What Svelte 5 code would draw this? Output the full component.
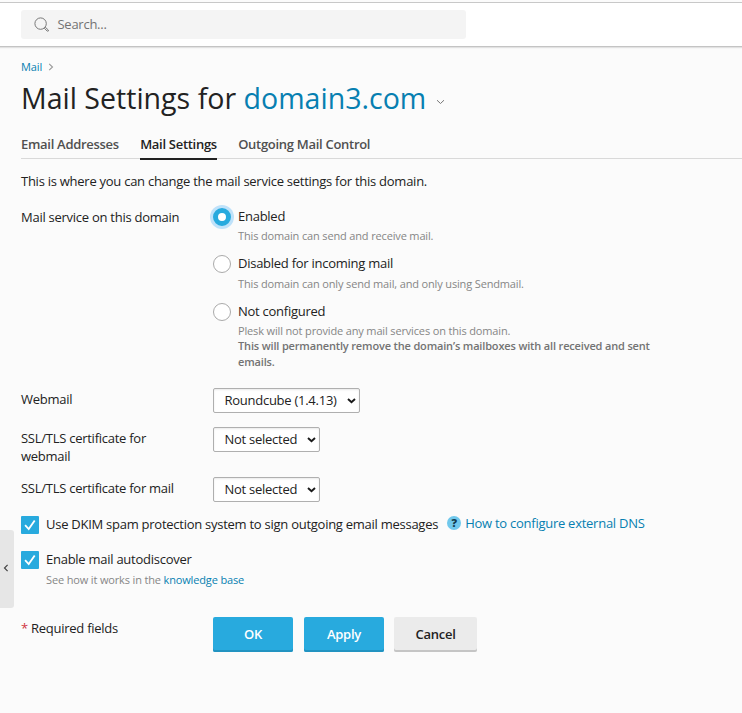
<script>
  let service = $state('enabled');
  let dkim = $state(true);
  let autodiscover = $state(true);
  const tabs = ['Email Addresses', 'Mail Settings', 'Outgoing Mail Control'];
  const modes = [
    { id: 'enabled', label: 'Enabled', hint: 'This domain can send and receive mail.' },
    { id: 'incoming', label: 'Disabled for incoming mail', hint: 'This domain can only send mail, and only using Sendmail.' },
    {
      id: 'none',
      label: 'Not configured',
      hint: 'Plesk will not provide any mail services on this domain.',
      warning: 'This will permanently remove the domain’s mailboxes with all received and sent emails.'
    }
  ];
  const selects = [
    { label: 'Webmail', value: 'Roundcube (1.4.13)', kind: 'webmail' },
    { label: 'SSL/TLS certificate for webmail', value: 'Not selected', kind: 'cert-webmail' },
    { label: 'SSL/TLS certificate for mail', value: 'Not selected', kind: 'cert-mail' }
  ];
</script>

{#snippet check(on)}
  <span class="box" class:on>
    {#if on}
      <svg width="18" height="18" viewBox="0 0 18 18"><path d="M4.1 9.2 7.7 13 13.7 4.4" fill="none" stroke="#fff" stroke-width="1.8" /></svg>
    {/if}
  </span>
{/snippet}

<div class="page">
  <header>
    <div class="search">
      <svg width="16" height="16" viewBox="0 0 16 16" fill="none" stroke="#777" stroke-width="1">
        <circle cx="6.6" cy="6.6" r="5.7" />
        <path d="M10.3 11.2 11.3 10.2 14.4 13.1Q14.8 14.4 13.3 14.2Z" />
      </svg>
      <span>Search...</span>
    </div>
  </header>

  <main>
    <nav class="crumbs">
      <a href="#mail">Mail</a>
      <svg width="6" height="8" viewBox="0 0 6 8"><path d="M1.2.8 4.5 4 1.2 7.2" fill="none" stroke="#999" stroke-width="1.1" /></svg>
    </nav>
    <h1>
      Mail Settings for <a href="#domain">domain3.com</a>
      <svg width="9" height="6" viewBox="0 0 9 6"><path d="M1 1.2 4.5 4.5 8 1.2" fill="none" stroke="#777" /></svg>
    </h1>
    <div class="tabs">
      {#each tabs as tab}
        <a href="#tab" class:active={tab === 'Mail Settings'}>{tab}</a>
      {/each}
    </div>

    <p class="intro">This is where you can change the mail service settings for this domain.</p>

    <div class="row service">
      <div class="label">Mail service on this domain</div>
      <div class="modes">
        {#each modes as mode}
          <label class="mode">
            <input type="radio" name="service" value={mode.id} bind:group={service} />
            <span class="dot"></span>
            <span class="text">
              <span class="name">{mode.label}</span>
              <span class="hint">{mode.hint}</span>
              {#if mode.warning}<span class="hint warning">{mode.warning}</span>{/if}
            </span>
          </label>
        {/each}
      </div>
    </div>

    {#each selects as s}
      <div class="row {s.kind}">
        <div class="label">{s.label}</div>
        <button class="select">
          <span>{s.value}</span>
          <svg width="9" height="6" viewBox="0 0 9 6"><path d="M1 1.1 4.5 4.2 8 1.1" fill="none" stroke="#1a1a1a" stroke-width="2" /></svg>
        </button>
      </div>
    {/each}

    <div class="option">
      <label>
        <input type="checkbox" bind:checked={dkim} />
        {@render check(dkim)}
        <span class="caption">Use DKIM spam protection system to sign outgoing email messages</span>
      </label>
      <span class="help">?</span>
      <a class="dns" href="#dns">How to configure external DNS</a>
    </div>
    <div class="option">
      <label>
        <input type="checkbox" bind:checked={autodiscover} />
        {@render check(autodiscover)}
        <span class="caption">Enable mail autodiscover</span>
      </label>
    </div>
    <p class="hint see">See how it works in the <a href="#kb">knowledge base</a></p>

    <div class="row actions">
      <div class="label"><span class="star">*</span> Required fields</div>
      <button class="btn primary">OK</button>
      <button class="btn primary">Apply</button>
      <button class="btn cancel">Cancel</button>
    </div>
  </main>

  <button class="handle" aria-label="Expand sidebar">
    <svg width="6" height="8" viewBox="0 0 6 8"><path d="M4.6.8 1.5 4 4.6 7.2" fill="none" stroke="#444" stroke-width="1.2" /></svg>
  </button>
</div>

<style>
  .page {
    position: relative;
    box-sizing: border-box;
    width: 100%;
    height: 713px;
    padding-top: 2px;
    overflow: hidden;
    background: #fbfbfb;
    color: #222;
    font: 13px/18px "Open Sans", "Noto Sans", sans-serif;
    letter-spacing: -0.26px;
  }
  a { color: #077fb1; text-decoration: none; }
  svg { display: block; flex: none; }
  input { position: absolute; opacity: 0; margin: 0; }
  button { font: inherit; letter-spacing: inherit; color: inherit; padding: 0; }
  header {
    box-sizing: border-box;
    height: 45px;
    padding: 7px 21px 0;
    background: #fff;
    border-top: 1px solid #c8c8c8;
    border-bottom: 1px solid #c4c4c4;
    box-shadow: 0 1px 1px #e2e2e2;
  }
  .search {
    box-sizing: border-box;
    display: flex;
    align-items: center;
    gap: 7.5px;
    width: 445px;
    height: 29px;
    padding: 0 0 1px 13px;
    border-radius: 3px;
    background: #f4f4f4;
    color: #737373;
  }
  .search svg { margin-top: 2px; }
  main { padding-left: 21px; }
  .crumbs { display: flex; align-items: center; gap: 6px; padding-top: 12px; height: 16px; font-size: 11px; line-height: 16px; letter-spacing: -0.1px; }
  h1 { display: flex; align-items: center; margin: 3px 0 1px; height: 40px; font-size: 28.55px; line-height: 40px; font-weight: 400; letter-spacing: 0; white-space: pre; }
  h1 svg { margin: 8px 0 0 10px; }
  .tabs { display: flex; gap: 21.3px; height: 39px; border-bottom: 1px solid #d9d9d9; font-weight: 600; letter-spacing: -0.29px; }
  .tabs a { box-sizing: border-box; height: 41px; padding-top: 16px; color: #505050; }
  .tabs a.active { color: #222; border-bottom: 2px solid #222; }
  .intro { margin: 13px 0 0; }
  .row { display: flex; align-items: flex-start; }
  .label { width: 170px; margin-right: 22px; flex: none; }
  .service { margin-top: 18px; height: 180px; }
  .modes { width: 455px; }
  .mode { display: flex; align-items: flex-start; gap: 7px; min-height: 47.4px; }
  .dot { box-sizing: border-box; flex: none; width: 18px; height: 18px; border: 1px solid #aaa; border-radius: 50%; background: #fff; }
  input:checked + .dot { border: 5.5px solid #28aade; box-shadow: 0 0 0 3px #bfe2fa; }
  .text { display: flex; flex-direction: column; margin-top: -1px; }
  .hint { font-size: 11px; line-height: 15.5px; letter-spacing: -0.15px; color: #868686; }
  .name + .hint { margin-top: 3px; }
  .mode:nth-child(2) .hint { margin-top: 3.4px; }
  .warning { width: 430px; font-weight: 600; letter-spacing: -0.16px; color: #737373; }
  .webmail { height: 39px; }
  .cert-webmail { height: 50px; }
  .cert-mail { height: 39px; }
  .webmail .label, .cert-webmail .label, .cert-mail .label { padding-top: 2px; }
  .select {
    box-sizing: border-box;
    display: flex;
    align-items: center;
    justify-content: space-between;
    width: 107px;
    height: 25px;
    padding: 0 3px 1px 10.5px;
    border: 1px solid #afafaf;
    border-radius: 2px;
    background: #fff;
    box-shadow: inset 0 1px 2px #e9e9e9;
  }
  .select svg { margin-top: 1px; }
  .webmail .select { width: 147px; }
  .option { display: flex; align-items: center; height: 18px; margin-bottom: 17px; }
  .option label { display: flex; align-items: center; gap: 7px; }
  .caption { margin-top: -2px; }
  .box { box-sizing: border-box; flex: none; width: 18px; height: 18px; border: 1px solid #aaa; border-radius: 1px; background: #fff; }
  .box.on { border: 0; background: #28aade; }
  .help { width: 14px; height: 14px; margin: -4px 4px 0 9px; border-radius: 50%; background: #70c8ec; color: #123c4f; font-size: 11px; line-height: 14px; font-weight: 800; letter-spacing: 0; text-align: center; }
  .dns { margin-top: -4px; }
  .see { margin: -14px 0 0 25px; }
  .actions { margin-top: 29.5px; }
  .actions .label { padding-top: 2px; }
  .star { color: #d0343f; }
  .btn { width: 80px; height: 35px; margin-right: 11px; padding-bottom: 1.5px; border: 0; border-radius: 2px; font-weight: 600; }
  .primary { background: #28aade; color: #fff; box-shadow: inset 0 -2px #2293c1; }
  .cancel { width: 83px; margin-left: -1px; background: #ebebeb; box-shadow: inset 0 -2px #c5c5c5; }
  .handle {
    position: absolute;
    left: 0;
    top: 530px;
    display: flex;
    align-items: center;
    width: 14px;
    height: 78px;
    padding: 0 0 2px 2.5px;
    border: 0;
    border-radius: 0 3px 3px 0;
    background: #e6e6e6;
  }
</style>
